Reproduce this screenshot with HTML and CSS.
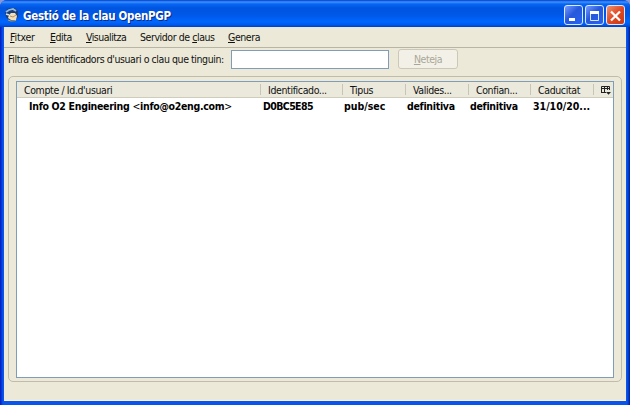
FILE: index.html
```html
<!DOCTYPE html>
<html lang="ca">
<head>
<meta charset="utf-8">
<title>Gestió de la clau OpenPGP</title>
<link rel="stylesheet" href="styles.css">
</head>
<body>
<main class="window">
  <header class="titlebar">
    <svg class="app-icon" viewBox="0 0 14 14" aria-hidden="true">
      <path d="M0 5 2 1 6 0 10 0 13 3 13 9 10 13 4 12 1 9Z" fill="#1d3f78"/>
      <path d="M1 4 4 2 8 1 11 3" fill="none" stroke="#8fbbe0" stroke-width="1.8"/>
      <path d="M4 7 6 5 10 5 12 8 11 12 6 12 3 10Z" fill="#f0dfb8"/>
      <path d="M1 6 4 7" fill="none" stroke="#d8e6ee" stroke-width="1.4"/>
      <path d="M5 8 8 9 11 7" fill="none" stroke="#b3936a" stroke-width="1"/>
      <path d="M3 12 6 13 11 12.5" fill="none" stroke="#ad9865" stroke-width="1.2"/>
    </svg>
    <h1 class="title">Gestió de la clau OpenPGP</h1>
    <div class="controls">
      <button class="control" aria-label="Minimitza"><svg viewBox="0 0 19 19"><path d="M5 13.5h6" stroke="#fff" stroke-width="3"/></svg></button>
      <button class="control" aria-label="Maximitza"><svg viewBox="0 0 19 19"><path d="M5.5 6.5h8v8h-8z" fill="none" stroke="#dbe8ff"/><path d="M5 6.5h9" stroke="#fff" stroke-width="3"/></svg></button>
      <button class="control close" aria-label="Tanca"><svg viewBox="0 0 19 19"><path d="m5 5.5 9 9m0-9-9 9" stroke="#fff" stroke-width="2.2"/></svg></button>
    </div>
  </header>
  <div class="content">
    <nav class="menubar">
      <span class="menu file"><u>F</u>itxer</span>
      <span class="menu edit"><u>E</u>dita</span>
      <span class="menu view"><u>V</u>isualitza</span>
      <span class="menu server">Servidor de <u>c</u>laus</span>
      <span class="menu generate"><u>G</u>enera</span>
    </nav>
    <div class="filter">
      <label class="filter-label" for="query">Filtra els identificadors d'usuari o clau que tinguin:</label>
      <input class="query" id="query" type="text">
      <button class="clear" disabled><u>N</u>eteja</button>
    </div>
    <section class="group">
      <div class="tree">
        <div class="row head">
          <span class="cell">Compte / Id.d'usuari</span>
          <span class="cell">Identificado...</span>
          <span class="cell">Tipus</span>
          <span class="cell">Valides...</span>
          <span class="cell">Confian...</span>
          <span class="cell">Caducitat</span>
          <span class="cell picker"><svg viewBox="0 0 10 9"><path d="M.5 7V.5h8V4M.5 2.5h8M3.5 1v6M6.5 1v3M0 6.5h5" fill="none" stroke="#222"/><path d="M5 6h5L7.5 8.8Z" fill="#222"/></svg></span>
        </div>
        <div class="row entry">
          <span class="cell">Info O2 Engineering <span class="angle">&lt;</span>info@o2eng.com<span class="angle">&gt;</span></span>
          <span class="cell key">D0BC5E85</span>
          <span class="cell type">pub/sec</span>
          <span class="cell">definitiva</span>
          <span class="cell">definitiva</span>
          <span class="cell date">31/10/20...</span>
        </div>
      </div>
    </section>
  </div>
</main>
</body>
</html>
```
FILE: styles.css
```css
* { box-sizing: border-box; }
body { margin: 0; background: #8797d7; font: 10.5px/13px "DejaVu Sans Condensed", "DejaVu Sans", sans-serif; letter-spacing: -.43px; color: #111; }
button, input { font: inherit; letter-spacing: inherit; margin: 0; padding: 0; }
.window { width: 630px; height: 405px; display: flex; flex-direction: column; padding: 0 4px 4px; border-radius: 7px 7px 0 0; background: linear-gradient(90deg, #0019bd 0, #0755ee 3px, #0755ee 627px, #001b9b 630px); overflow: hidden; }
.titlebar { height: 27px; flex: none; margin: 0 -4px; padding: 4px 5px 0 5px; display: flex; align-items: center; background: linear-gradient(#003dcc 0, #3d92ff 2px, #0867f5 4px, #0054df 8px, #0058e8 15px, #0066ff 22px, #0057e6 25px, #003fc8 27px); }
.app-icon { width: 14px; height: 14px; margin-top: -2px; }
.title { margin: 0 0 0 4px; font-size: 11.5px; line-height: 16px; color: #fff; text-shadow: 1px 1px #062b82; letter-spacing: -.28px; white-space: nowrap; }
.controls { display: flex; gap: 2px; margin: -1px 0 0 auto; }
.control { width: 19px; height: 20px; border: 1px solid #dce9ff; border-radius: 3px; background: linear-gradient(135deg, #769cff, #2758dc 45%, #2863ef); overflow: hidden; }
.control svg { display: block; width: 19px; height: 19px; margin: -1px; }
.close { background: linear-gradient(135deg, #f1936e, #df4a23 50%, #c83914); }
.content { flex: 1; background: #ece9d8; border-bottom: 1px solid #fff3cf; }
.menubar { height: 21px; display: flex; align-items: center; padding-left: 6px; border-bottom: 1px solid #b8b5a5; }
.menu { flex: none; white-space: nowrap; }
.file { width: 40px; letter-spacing: -.2px; }
.edit { width: 36px; }
.view { width: 54px; letter-spacing: -.5px; }
.server { width: 88px; }
.filter { height: 28px; display: flex; align-items: flex-start; padding: 1px 0 0 4px; }
.filter-label { width: 223px; padding-top: 4px; white-space: nowrap; }
.query { width: 158px; height: 19px; margin-top: 1px; border: 1px solid #7f9db9; background: #fff; }
.clear { width: 60px; height: 20px; margin: 0 0 0 9px; border: 1px solid #cbc8b9; border-radius: 3px; background: #f3f1e7; color: #aaa797; }
.group { width: 614px; height: 306px; margin-left: 4px; padding: 4px 7px 3px; border: 1px solid #c0bcab; border-radius: 5px; }
.tree { height: 297px; border: 1px solid #7f9db9; background: #fff; }
.row { display: grid; grid-template-columns: 243px 82px 63px 63px 62px 63px 1fr; align-items: center; white-space: nowrap; }
.head { height: 16px; background: #ebe9dc; border-bottom: 1px solid #cfccbb; letter-spacing: -.38px; }
.head .cell { height: 11px; padding-left: 7px; line-height: 12px; border-left: 1px solid #c8c5b4; }
.head .cell:first-child { border: 0; }
.head .picker { display: flex; align-items: center; }
.picker svg { width: 10px; height: 9px; margin-top: 2px; }
.entry { height: 17px; font-weight: bold; letter-spacing: -.3px; color: #000; }
.entry .cell { padding-left: 2px; }
.entry .cell:first-child { padding-left: 12px; }
.entry .key { padding-left: 3px; letter-spacing: -.6px; }
.entry .type { letter-spacing: 0; }
.entry .date { padding-left: 3px; letter-spacing: 0; }
.angle { font-weight: normal; }
```
